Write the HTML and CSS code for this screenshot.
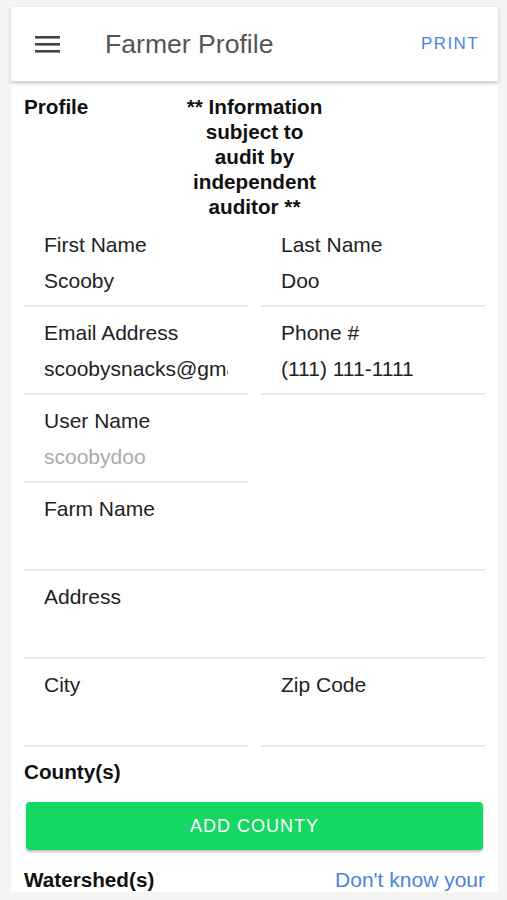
FILE: index.html
```html
<!DOCTYPE html>
<html lang="en">
<head>
    <meta charset="UTF-8">
    <meta name="viewport" content="width=device-width, initial-scale=1.0">
    <title>Farmer Profile</title>
    <link rel="stylesheet" href="styles.css">
</head>
<body>

<header class="app-bar">
    <button class="menu-btn" aria-label="Menu">
        <svg width="25" height="18" viewBox="0 0 25 18">
            <rect x="0" y="1" width="25" height="2.6" fill="#444"/>
            <rect x="0" y="8" width="25" height="2.6" fill="#444"/>
            <rect x="0" y="15" width="25" height="2.6" fill="#444"/>
        </svg>
    </button>
    <h1 class="app-title">Farmer Profile</h1>
    <a class="print-link" href="#">PRINT</a>
</header>

<main class="profile-card">
    <div class="profile-head">
        <div class="section-title">Profile</div>
        <div class="notice">** Information subject to audit by independent auditor **</div>
        <div></div>
    </div>

    <form class="field-grid">
        <div class="field">
            <label for="firstName">First Name</label>
            <input type="text" id="firstName" value="Scooby">
        </div>
        <div class="field">
            <label for="lastName">Last Name</label>
            <input type="text" id="lastName" value="Doo">
        </div>

        <div class="field">
            <label for="email">Email Address</label>
            <input type="email" id="email" value="scoobysnacks@gmail.com">
        </div>
        <div class="field">
            <label for="phone">Phone #</label>
            <input type="tel" id="phone" value="(111) 111-1111">
        </div>

        <div class="field">
            <label for="userName">User Name</label>
            <input type="text" id="userName" placeholder="scoobydoo">
        </div>
        <div class="field-blank"></div>

        <div class="field wide">
            <label for="farmName">Farm Name</label>
            <input type="text" id="farmName">
        </div>

        <div class="field wide">
            <label for="address">Address</label>
            <input type="text" id="address">
        </div>

        <div class="field">
            <label for="city">City</label>
            <input type="text" id="city">
        </div>
        <div class="field">
            <label for="zip">Zip Code</label>
            <input type="text" id="zip">
        </div>
    </form>

    <div class="section-title county-title">County(s)</div>
    <button class="add-btn" type="button">ADD COUNTY</button>

    <div class="watershed-row">
        <div class="section-title">Watershed(s)</div>
        <a class="help-link" href="#">Don't know your watershed?</a>
    </div>
</main>

</body>
</html>
```

FILE: styles.css
```css
body {
    font-family: "Liberation Sans", Arial, sans-serif;
    background-color: #f4f4f4;
    margin: 0;
    padding: 7px 9px 0 11px;
    color: #222;
}

.app-bar {
    display: flex;
    align-items: center;
    height: 74px;
    background: white;
    box-shadow: 0 2px 4px rgba(0, 0, 0, 0.18);
    position: relative; /* keep shadow above the card */
    z-index: 1;
}

.menu-btn {
    background: none;
    border: none;
    padding: 0;
    margin: 0 0 0 24px;
    width: 25px;
    height: 18px;
    display: flex;
}

.app-title {
    flex: 1;
    margin: 0 0 0 45px;
    font-size: 26.6px;
    font-weight: normal;
    color: #555;
}

.print-link {
    margin-right: 19px;
    font-size: 17px;
    letter-spacing: 1.4px;
    color: #4a84dc;
    text-decoration: none;
}

.profile-card {
    background: white;
    margin-top: 3px;
    padding: 10px 13px 0;
    height: 798px;
    overflow: hidden;
}

.section-title {
    font-size: 20.7px;
    font-weight: bold;
    line-height: 25px;
    color: #111;
}

.profile-head {
    display: grid;
    grid-template-columns: 1fr 142px 1fr;
}

.notice {
    text-align: center;
    font-size: 20.7px;
    font-weight: bold;
    line-height: 25px;
    color: #111;
}

.field-grid {
    display: grid;
    grid-template-columns: 1fr 1fr;
    column-gap: 13px;
    margin: 0;
}

.field {
    padding: 14px 20px 12px;
    border-bottom: 2px solid #e8e8e8;
    display: flex;
    flex-direction: column;
    min-width: 0;
}

.field.wide {
    grid-column: span 2;
}

.field label {
    font-size: 21px;
    line-height: 24px;
    color: #222;
}

.field input {
    margin-top: 12px;
    padding: 0;
    border: none;
    outline: none;
    font-family: inherit;
    font-size: 21px;
    line-height: 24px;
    height: 24px;
    color: #222;
    width: 100%;
    background: transparent;
}

.field input::placeholder {
    color: #aaa;
}

.county-title {
    margin-top: 12px;
}

.add-btn {
    display: block;
    width: calc(100% - 4px);
    margin: 18px 2px 0;
    height: 48px;
    background-color: #14d862;
    color: white;
    border: none;
    border-radius: 4px;
    font-family: inherit;
    font-size: 18px;
    letter-spacing: 1px;
    box-shadow: 0 2px 3px rgba(0, 0, 0, 0.25);
    cursor: pointer;
}

.watershed-row {
    display: flex;
    justify-content: space-between;
    margin-top: 17px;
}

.help-link {
    width: 160px;
    text-align: right;
    font-size: 21px;
    line-height: 25px;
    color: #4a84dc;
    text-decoration: none;
}
```
